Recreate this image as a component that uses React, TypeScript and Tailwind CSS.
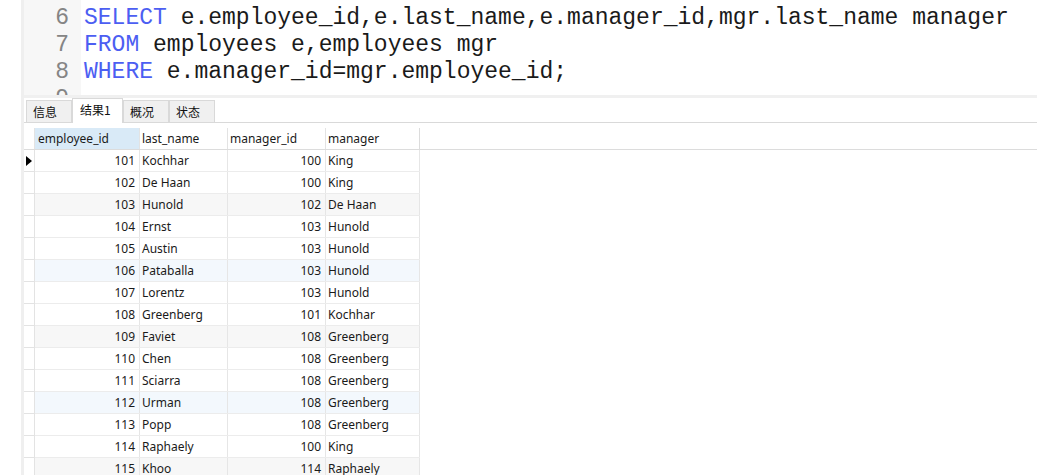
import React from 'react';

const rows: [number, string, number, string][] = [
  [101, 'Kochhar', 100, 'King'],
  [102, 'De Haan', 100, 'King'],
  [103, 'Hunold', 102, 'De Haan'],
  [104, 'Ernst', 103, 'Hunold'],
  [105, 'Austin', 103, 'Hunold'],
  [106, 'Pataballa', 103, 'Hunold'],
  [107, 'Lorentz', 103, 'Hunold'],
  [108, 'Greenberg', 101, 'Kochhar'],
  [109, 'Faviet', 108, 'Greenberg'],
  [110, 'Chen', 108, 'Greenberg'],
  [111, 'Sciarra', 108, 'Greenberg'],
  [112, 'Urman', 108, 'Greenberg'],
  [113, 'Popp', 108, 'Greenberg'],
  [114, 'Raphaely', 100, 'King'],
  [115, 'Khoo', 114, 'Raphaely'],
  [116, 'Baida', 114, 'Raphaely'],
];

const codeLines = [
  { n: 6, kw: 'SELECT', rest: ' e.employee_id,e.last_name,e.manager_id,mgr.last_name manager' },
  { n: 7, kw: 'FROM', rest: ' employees e,employees mgr' },
  { n: 8, kw: 'WHERE', rest: ' e.manager_id=mgr.employee_id;' },
  { n: 9, kw: '', rest: '' },
];

const tabs = ['信息', '结果1', '概况', '状态'];

const App: React.FC = () => {
  return (
    <div className="w-[1037px] h-[475px] overflow-hidden bg-white flex">
      <div className="w-[21px] shrink-0 bg-white" />
      <div className="w-[3px] shrink-0 bg-[#efefef]" />
      <div className="flex-1 flex flex-col min-w-0">
        {/* Editor */}
        <div className="h-[95px] shrink-0 flex overflow-hidden font-['Liberation_Mono',monospace] text-[23px] leading-[27px]">
          <div className="w-[57px] shrink-0 bg-[#f7f7f7] pt-[5px] pr-[12px] text-right text-[#858585]">
            {codeLines.map((l) => (
              <div key={l.n}>{l.n}</div>
            ))}
          </div>
          <div className="flex-1 pt-[5px] pl-[3px] whitespace-pre text-[#1a1a1a]">
            {codeLines.map((l) => (
              <div key={l.n}>
                <span className="text-[#4c5ef2]">{l.kw}</span>
                {l.rest}
              </div>
            ))}
          </div>
        </div>
        <div className="h-[3px] shrink-0 bg-[#f0f0f0]" />

        {/* Tabs */}
        <div className="h-[25px] shrink-0 flex items-end pl-[2px] border-b border-[#d9d9d9] font-['Noto_Sans_CJK_SC','Noto_Sans',sans-serif] text-[12px] text-[#111]">
          {tabs.map((t, i) =>
            i === 1 ? (
              <div
                key={t}
                className="h-[25px] w-[51px] -mb-px bg-white border border-b-0 border-[#d9d9d9] pl-[7px] pt-[1px] leading-[20px]"
              >
                {t}
              </div>
            ) : (
              <div
                key={t}
                className="h-[22px] w-[46px] bg-[#f0f0f0] border border-b-0 border-[#d9d9d9] pl-[6px] leading-[22px]"
              >
                {t}
              </div>
            )
          )}
        </div>
        <div className="h-[5px] shrink-0" />

        {/* Result grid */}
        <div className="flex flex-col font-['Noto_Sans','Noto_Sans_CJK_SC',sans-serif] text-[12px] text-[#1a1a1a]">
          <div className="flex h-[22px] border-b border-[#dcdcdc]">
            <div className="w-[11px] shrink-0 border-r border-[#e3e3e3]" />
            <div className="w-[105px] shrink-0 bg-[#d9eaf7] border-r border-[#e3e3e3] pl-[3px] leading-[21px]">employee_id</div>
            <div className="w-[88px] shrink-0 border-r border-[#e3e3e3] pl-[2px] leading-[21px]">last_name</div>
            <div className="w-[98px] shrink-0 border-r border-[#e3e3e3] pl-[2px] leading-[21px]">manager_id</div>
            <div className="w-[94px] shrink-0 border-r border-[#dcdcdc] pl-[2px] leading-[21px]">manager</div>
          </div>
          {rows.map(([id, name, mid, mgr], i) => {
            const bg = i % 6 === 2 ? 'bg-[#f7f7f7]' : i % 6 === 5 ? 'bg-[#f3f8fd]' : 'bg-white';
            return (
              <div key={id} className="flex h-[22px]">
                <div className="w-[11px] shrink-0 border-r border-b border-[#e3e3e3] flex items-center justify-center">
                  {i === 0 && (
                    <svg width="6" height="10" viewBox="0 0 6 10">
                      <path d="M0 0 L6 5 L0 10 Z" fill="#000" />
                    </svg>
                  )}
                </div>
                <div className={`flex ${bg} border-b border-[#ececec]`}>
                  <div className="w-[105px] shrink-0 border-r border-[#e6e6e6] text-right pr-[4px] leading-[21px]">{id}</div>
                  <div className="w-[88px] shrink-0 border-r border-[#e6e6e6] pl-[2px] leading-[21px]">{name}</div>
                  <div className="w-[98px] shrink-0 border-r border-[#e6e6e6] text-right pr-[4px] leading-[21px]">{mid}</div>
                  <div className="w-[94px] shrink-0 border-r border-[#e6e6e6] pl-[2px] leading-[21px]">{mgr}</div>
                </div>
              </div>
            );
          })}
        </div>
      </div>
    </div>
  );
};

export default App;
